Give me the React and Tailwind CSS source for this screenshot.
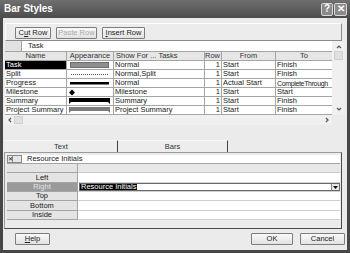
import React from 'react';

const rows = [
    { name: 'Task', look: 'task', show: 'Normal', row: 1, from: 'Start', to: 'Finish', selected: true },
    { name: 'Split', look: 'split', show: 'Normal,Split', row: 1, from: 'Start', to: 'Finish' },
    { name: 'Progress', look: 'progress', show: 'Normal', row: 1, from: 'Actual Start', to: 'CompleteThrough', tight: true },
    { name: 'Milestone', look: 'milestone', show: 'Milestone', row: 1, from: 'Start', to: 'Start' },
    { name: 'Summary', look: 'summary', show: 'Summary', row: 1, from: 'Start', to: 'Finish' },
    { name: 'Project Summary', look: 'project', show: 'Project Summary', row: 1, from: 'Start', to: 'Finish' },
];

const textRows = ['Left', 'Right', 'Top', 'Bottom', 'Inside'];

function Appearance({ look }) {
    return (
        <svg width="46" height="8" viewBox="0 0 46 8">
            {look === 'task' && <rect x="3.5" y="1.5" width="38" height="5" fill="#8e8e8e" stroke="#6e6e6e" />}
            {look === 'split' && <line x1="4" y1="4.5" x2="42" y2="4.5" stroke="#555" strokeDasharray="1 1" />}
            {look === 'progress' && <rect x="3" y="3" width="39" height="2.5" fill="#000" />}
            {look === 'milestone' && <polygon points="5,1.5 8,4.5 5,7.5 2,4.5" fill="#000" />}
            {look === 'summary' && <polygon points="2,1 43,1 43,7 41,5 4,5 2,7" fill="#000" />}
            {look === 'project' && <polygon points="2,1 43,1 43,7 41,5 4,5 2,7" fill="#7c7c7c" />}
        </svg>
    );
}

function Btn({ children, className = '', disabled }) {
    return (
        <div className={`h-[12px] flex items-center justify-center border border-[#7d7d7d] rounded-[1px] bg-gradient-to-b from-[#fafafa] to-[#e2e2e2] ${disabled ? 'text-[#a8a8a8]' : 'text-[#222]'} ${className}`}>
            {children}
        </div>
    );
}

function Arrow({ d }) {
    return (
        <svg width="6" height="6" viewBox="0 0 6 6">
            <path d={d} fill="none" stroke="#555" strokeWidth="1.2" />
        </svg>
    );
}

export default function App() {
    return (
        <div className="w-[350px] h-[253px] bg-[#474747] flex flex-col overflow-hidden whitespace-nowrap font-['Liberation_Sans',Arial,sans-serif] text-[7.5px] leading-none text-[#222]">
            <div className="h-[18px] shrink-0 flex items-center justify-between pl-[4px] pr-[3px] bg-gradient-to-b from-[#707070] to-[#4c4c4c]">
                <span className="text-white font-bold text-[10px]">Bar Styles</span>
                <div className="flex gap-[1px]">
                    <div className="w-[12px] h-[13px] rounded-[2px] border border-[#d8d8d8] bg-[#8a8a8a] text-white font-bold text-[10px] flex items-center justify-center">?</div>
                    <div className="w-[13px] h-[13px] rounded-[2px] border border-[#d8d8d8] bg-[#8a8a8a] text-white font-bold text-[10px] flex items-center justify-center">✕</div>
                </div>
            </div>

            <div className="flex-1 mx-[3px] mb-[3px] bg-[#ebebeb] flex flex-col">
                <div className="ml-[2px] mt-[5px] w-[340px] flex flex-col">
                    <div className="h-[18px] w-[337px] border-t border-l border-white border-r border-b border-r-[#8a8a8a] border-b-[#8a8a8a] bg-[#ececec] flex items-start pt-[3px] pl-[9px] gap-[5px]">
                        <Btn className="w-[36px]">C<span className="underline">u</span>t Row</Btn>
                        <Btn className="w-[41px]" disabled>Paste Row</Btn>
                        <Btn className="w-[43px]"><span className="underline">I</span>nsert Row</Btn>
                    </div>
                    <div className="flex">
                        <div className="w-[327px] flex flex-col">
                            <div className="h-[11px] flex border-b border-[#a5a5a5]">
                                <div className="w-[17px] bg-[#e2e2e2] border-r border-[#a5a5a5]" />
                                <div className="flex-1 bg-white flex items-center pl-[6px]">Task</div>
                            </div>
                            <div className="h-[9px] flex bg-[#e6e6e6] text-[#333]">
                                <div className="w-[62px] border-r border-b border-[#a5a5a5] flex items-center justify-center">Name</div>
                                <div className="w-[47px] border-r border-b border-[#a5a5a5] flex items-center justify-center">Appearance</div>
                                <div className="w-[91px] border-r border-b border-[#a5a5a5] flex items-center pl-[2px]">Show For ... Tasks</div>
                                <div className="w-[17px] border-r border-b border-[#a5a5a5] flex items-center justify-end pr-[1px]">Row</div>
                                <div className="w-[54px] border-r border-b border-[#a5a5a5] flex items-center justify-center">From</div>
                                <div className="w-[56px] border-b border-[#a5a5a5] flex items-center justify-center">To</div>
                            </div>
                            {rows.map((r) => (
                                <div key={r.name} className="h-[9px] flex bg-white">
                                    <div className={`w-[62px] overflow-hidden border-r border-b border-[#a5a5a5] flex items-center pl-[1px] ${r.selected ? 'bg-black text-white' : ''}`}>{r.name}</div>
                                    <div className="w-[47px] border-r border-b border-[#a5a5a5] flex items-center"><Appearance look={r.look} /></div>
                                    <div className="w-[91px] overflow-hidden border-r border-b border-[#a5a5a5] flex items-center pl-[1px]">{r.show}</div>
                                    <div className="w-[17px] border-r border-b border-[#a5a5a5] flex items-center justify-end pr-[1px]">{r.row}</div>
                                    <div className="w-[54px] overflow-hidden border-r border-b border-[#a5a5a5] flex items-center pl-[1px]">{r.from}</div>
                                    <div className={`w-[56px] border-b border-[#a5a5a5] flex items-center pl-[1px] ${r.tight ? 'text-[7px] tracking-[-0.35px]' : ''}`}>{r.to}</div>
                                </div>
                            ))}
                            <div className="h-[10px] flex items-center bg-[#f0f0f0] px-[2px]">
                                <Arrow d="M4,1 L2,3 L4,5" />
                                <div className="w-[9px] h-[8px] ml-[1px] bg-[#e0e0e0] border border-[#d0d0d0]" />
                                <div className="flex-1" />
                                <Arrow d="M2,1 L4,3 L2,5" />
                            </div>
                        </div>
                        <div className="w-[13px] flex flex-col">
                            <div className="h-[74px] bg-[#f0f0f0] flex flex-col items-center pt-[3px]">
                                <Arrow d="M1,4 L3,2 L5,4" />
                                <div className="w-[9px] h-[9px] mt-[1px] bg-[#e0e0e0] border border-[#d0d0d0]" />
                                <div className="flex-1" />
                                <div className="mb-[3px]"><Arrow d="M1,2 L3,4 L5,2" /></div>
                            </div>
                            <div className="h-[10px] bg-[#ebebeb]" />
                        </div>
                    </div>
                </div>

                <div className="mt-[15px] ml-[2px] flex h-[12px] text-[#333]">
                    <div className="w-[113px] border-t border-[#f8f8f8] border-r border-r-[#444] bg-[#ededed] flex items-center justify-center">Text</div>
                    <div className="w-[110px] border-t border-[#f8f8f8] border-r border-r-[#444] bg-[#ededed] flex items-center justify-center">Bars</div>
                </div>

                <div className="ml-[1px] w-[338px] h-[77px] border border-t-[#9a9a9a] border-l-[#9a9a9a] border-r-[#4a4a4a] border-b-[#4a4a4a] flex flex-col pt-[2px] pl-[2px] pr-[1px]">
                    <div className="h-[8px] flex">
                        <div className="w-[6px] h-[8px] border border-[#8a8a8a] bg-[#e6e6e6] flex items-center justify-center text-[6px]">✕</div>
                        <div className="w-[9px] h-[8px] border border-[#8a8a8a] border-l-0 bg-[#e6e6e6]" />
                        <div className="flex-1 bg-white flex items-center pl-[5px]">Resource Initials</div>
                    </div>
                    <div className="flex flex-col border-t border-[#a5a5a5]">
                        <div className="h-[9px] flex">
                            <div className="w-[71px] bg-[#e4e4e4] border-r border-b border-[#a5a5a5]" />
                            <div className="flex-1 bg-[#e8e8e8] border-b border-[#c8c8c8]" />
                        </div>
                        {textRows.map((t, i) => (
                            <div key={t} className={`${i === 0 || i === 3 ? 'h-[10px]' : 'h-[9px]'} flex`}>
                                <div className={`w-[71px] border-r border-b border-[#a5a5a5] flex items-center justify-center ${t === 'Right' ? 'bg-[#9a9a9a] text-[#e4e4e4]' : 'bg-[#e4e4e4] text-[#222]'}`}>{t}</div>
                                <div className="flex-1 bg-white border-b border-[#d0d0d0] flex items-center">
                                    {t === 'Right' && (
                                        <div className="flex-1 h-[8px] flex items-center border border-[#6a6a6a] ml-[1px]">
                                            <span className="bg-black text-white h-full flex items-center px-[1px]">Resource Initials</span>
                                            <div className="flex-1" />
                                            <div className="w-[8px] h-full border-l border-[#8a8a8a] bg-[#e8e8e8] flex items-center justify-center">
                                                <svg width="5" height="3" viewBox="0 0 5 3"><polygon points="0,0 5,0 2.5,3" fill="#111" /></svg>
                                            </div>
                                        </div>
                                    )}
                                </div>
                            </div>
                        ))}
                    </div>
                </div>

                <div className="flex items-start mt-[4px] pl-[12px]">
                    <Btn className="w-[35px]"><span className="underline">H</span>elp</Btn>
                    <div className="flex-1" />
                    <Btn className="w-[42px]">OK</Btn>
                    <Btn className="w-[45px] ml-[7px] mr-[2px]">Cancel</Btn>
                </div>
            </div>
        </div>
    );
}
